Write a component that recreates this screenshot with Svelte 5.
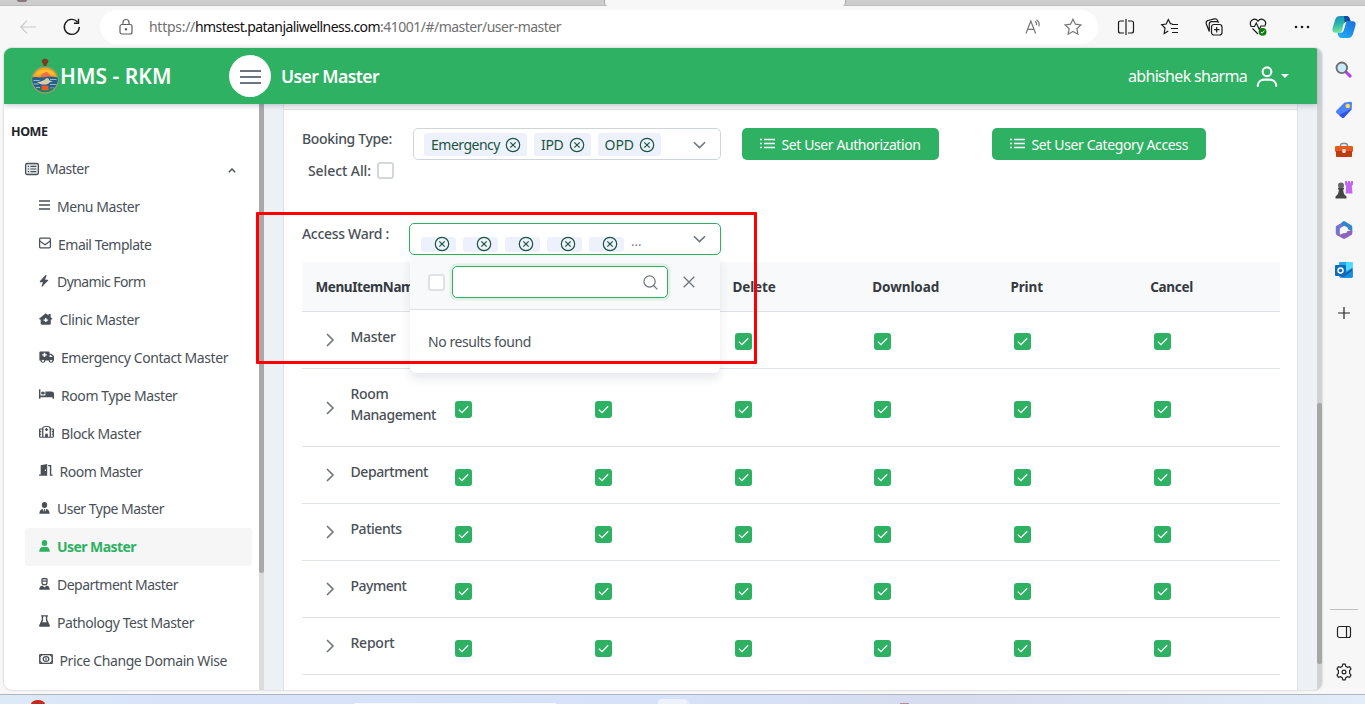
<script>
  // Tightens or opens the tracking of a label until it takes up the given width.
  function fit(node, width) {
    const n = node.textContent.length;
    const natural = node.getBoundingClientRect().width;
    node.style.letterSpacing = `${(width - natural) / n}px`;
  }

  const icons = {
    list: '<rect x=".7" y="1.7" width="14.6" height="12.6" rx="1.6" fill="#e4e8ec" stroke="currentColor" stroke-width="1.5"/><path d="M3.2 5h1.5M6.2 5h6.7M3.2 8h1.5M6.2 8h6.7M3.2 11h1.5M6.2 11h6.7" stroke="currentColor" stroke-width="1.4"/>',
    bars: '<path d="M0 2.700h16M0 8h16M0 13.300h16" stroke="currentColor" stroke-width="1.900"/>',
    mail: '<rect x=".8" y="1.600" width="14.4" height="12.800" rx="1.5" fill="none" stroke="currentColor" stroke-width="1.7"/><path d="M1 5.2l7 5 7-5" fill="none" stroke="currentColor" stroke-width="1.7"/>',
    bolt: '<path d="M10.200.3 1.300 8.400c-.5.500-.1 1.100.5 1.100h4.600l-2.300 5.300c-.2.7.5 1.100 1.100.7l9.500-8.100c.5-.4.2-1.100-.4-1.100H9.700l2.300-5.200c.3-.8-1.100-1.500-1.800-.8z" fill="currentColor"/>',
    clinic: '<path fill-rule="evenodd" d="M8 .3 11.300 3.300V1.200h2.500v4.400L16 7.800l-.8.9H14V14c0 .8-.6 1.500-1.300 1.500H3.300C2.600 15.500 2 14.800 2 14V8.700H.8L0 7.800zM7.200 6.600v1.900H5.300v1.700h1.900v1.900h1.700v-1.900h1.900V8.500H8.900V6.600z" fill="currentColor"/>',
    ambulance: '<path fill-rule="evenodd" d="M1.500.5h8.700c.7 0 1.100.5 1.100 1.100V3.500h1.900L16 6.700v6h-1a2.200 2.200 0 0 1-4.300 0H6.300a2.200 2.200 0 0 1-4.300 0H.4V1.600C.4 1 .8.500 1.500.5zM5 2.400v1.900H3.300v1.800H5V8h1.700V6.100h1.700V4.300H6.700V2.400zm6.300 2.800V8h3.200v-.5l-2-2.300z" fill="currentColor"/><circle cx="4.200" cy="13" r="2" fill="#fff" stroke="currentColor" stroke-width="1.400"/><circle cx="12.900" cy="13" r="2" fill="#fff" stroke="currentColor" stroke-width="1.400"/>',
    bed: '<path d="M0 1.800h1.500v8.200h5.300V4.700h6.400A2.800 2.800 0 0 1 16 7.500v6.900h-1.500v-2.200h-13v2.200H0z" fill="currentColor"/><circle cx="4.200" cy="6.600" r="2" fill="currentColor"/>',
    hospital: '<path d="M4 15V3C4 1.300 5 .7 8 .7s4 .6 4 2.300v12M4 4H1.200c-.4 0-.5.2-.5.5v9.500c0 .6.3 1 1 1h12.600c.7 0 1-.4 1-1V4.500c0-.3-.1-.5-.5-.5H12M.7 7.500h1.700M.7 11h1.700M13.600 7.500h1.700M13.600 11h1.700M8 2.800v4M6.300 4.800h3.400" fill="none" stroke="currentColor" stroke-width="1.400"/><path d="M6.500 15v-3.500a1.500 1.500 0 0 1 3 0V15z" fill="currentColor"/>',
    door: '<path fill-rule="evenodd" d="M2 1.800 9.700.1v15.400H0v-1.600h2zM7 7.300v2h1.200v-2z" fill="currentColor"/><path d="M10.800 2.300h2.900v12.400H16" fill="none" stroke="currentColor" stroke-width="1.700"/>',
    tie: '<circle cx="8" cy="4" r="3.900" fill="currentColor"/><path d="M.5 15.600c0-3.600 1.800-5.900 5-6.300L6.800 13l.7-2.300-.7-1.400h2.400l-.7 1.400.7 2.300 1.300-3.700c3.200.4 5 2.700 5 6.300z" fill="currentColor"/>',
    user: '<circle cx="8" cy="4" r="4" fill="currentColor"/><path d="M.3 15.800c0-3.900 2-6.500 5.300-6.500h4.800c3.300 0 5.300 2.600 5.300 6.500z" fill="currentColor"/>',
    nurse: '<path d="M4.300 1.500C6 .4 10 .4 11.700 1.500v4c0 4.600-7.400 4.600-7.400 0zM4.300 4.300h7.400" fill="none" stroke="currentColor" stroke-width="1.700"/><path d="M.3 15.800c0-3.600 1.800-5.500 4.700-5.900l3 2.700 3-2.700c2.900.4 4.700 2.300 4.700 5.900z" fill="currentColor"/>',
    flask: '<path fill-rule="evenodd" d="M3 .2h10v1.900h-1v4.200l3.700 7.200c.5 1-.1 2.300-1.300 2.300H1.600c-1.200 0-1.800-1.300-1.300-2.300L4 6.300V2.100H3zM6 2.100v5L4.800 9.500h6.400L10 7.100v-5z" fill="currentColor"/>',
    money: '<rect x=".9" y="2.200" width="14.200" height="11.600" rx=".8" fill="none" stroke="currentColor" stroke-width="1.700"/><circle cx="8" cy="8" r="3.200" fill="none" stroke="currentColor" stroke-width="1.500"/><path d="M8 6.300v3.400M1 5 3.500 2.500M1 11l2.500 2.500M12.500 2.500 15 5M12.500 13.500 15 11" stroke="currentColor" stroke-width="1.300"/>'
  };

  const menu = [
    ['bars', 'Menu Master', 82.5, 11, 8],
    ['mail', 'Email Template', 93.5, 12, 8],
    ['bolt', 'Dynamic Form', 88.5, 10, 9],
    ['clinic', 'Clinic Master', 80, 13.5, 8],
    ['ambulance', 'Emergency Contact Master', 167, 15, 8],
    ['bed', 'Room Type Master', 116.5, 15, 8],
    ['hospital', 'Block Master', 80, 15, 8],
    ['door', 'Room Master', 83, 13.5, 8],
    ['tie', 'User Type Master', 107, 11, 8],
    ['user', 'User Master', 79, 11, 8],
    ['nurse', 'Department Master', 121, 11, 8],
    ['flask', 'Pathology Test Master', 137, 11, 8],
    ['money', 'Price Change Domain Wise', 167.5, 14, 7.5]
  ];

  const tags = [['Emergency', 69], ['IPD', 22.500], ['OPD', 29.500]];
  const heads = [['Delete', 43], ['Download', 67], ['Print', 32.500], ['Cancel', 43]];
  const rows = [
    [['Master', 45]],
    [['Room', 38], ['Management', 85.5]],
    [['Department', 77.5]],
    [['Patients', 51]],
    [['Payment', 56]],
    [['Report', 44]]
  ];
</script>

{#snippet down()}
  <svg class="down" viewBox="0 0 14 8"><path d="M1 1l6 5.800L13 1" /></svg>
{/snippet}
{#snippet remove()}
  <svg class="remove" viewBox="0 0 16 16"><circle cx="8" cy="8" r="6.700" /><path d="M5.300 5.300l5.400 5.400M10.700 5.300l-5.400 5.400" /></svg>
{/snippet}
{#snippet lines()}
  <svg class="lines" viewBox="0 0 15 12"><path d="M0 1.500h2M4 1.500h11M0 5.500h2M4 5.500h11M0 9.500h2M4 9.500h11" /></svg>
{/snippet}

<div class="screen">
  <div class="tabs"><i class="fav"></i><i class="tab"></i></div>

  <div class="toolbar">
    <svg class="back" viewBox="0 0 16 14"><path d="M16 7H1M7 .7.800 7 7 13.300" /></svg>
    <svg class="reload" viewBox="0 0 18 18"><path d="M14.500 4A7.500 7.500 0 1 0 16.300 9M15.500 .8v4.400H11" /></svg>
    <div class="address">
      <svg class="lock" viewBox="0 0 14 16"><rect x="1" y="5.500" width="12" height="9.500" rx="2" /><path d="M4 5.500V3.500a3 3 0 0 1 6 0v2" /><circle cx="7" cy="10.200" r=".7" /></svg>
      <span class="url"><span use:fit={46}>https://</span><b use:fit={185}>hmstest.patanjaliwellness.com</b><span use:fit={181}>:41001/#/master/user-master</span></span>
      <svg class="read" viewBox="0 0 17 16"><path d="M1 14.500 5.800 2l4.800 12.500M2.700 10.300h6.200" /><path d="M10 2.200c1.500 1 1.800 2.600 1.500 4M11.500.8c2.600 1.700 3 4.200 2.400 6.500" /></svg>
      <svg class="star" viewBox="0 0 18 18"><path d="M9 1.200l2.400 5 5.500.7-4 3.800 1 5.500L9 13.500l-4.900 2.700 1-5.500-4-3.800 5.500-.7z" /></svg>
    </div>
    <div class="tools">
      <svg viewBox="0 0 18 18"><path d="M7 3H3.500C2.300 3 1.500 3.700 1.500 5v8c0 1.300.8 2 2 2H7M11 3h3.500c1.200 0 2 .7 2 2v8c0 1.300-.8 2-2 2H11M9 1v16" /></svg>
      <svg viewBox="0 0 18 18"><path d="M11.500 6 9.500 5.700 7.300 1.500 5.200 6l-4.500.7L4 10l-.8 5.500 4.100-2.500M11 6.500h6M10 10.500h7M11 14.500h6" /></svg>
      <svg viewBox="0 0 18 18"><rect x="6.500" y="6.500" width="10.500" height="10.500" rx="2.500" /><path d="M11.700 9v5.500M9 11.700h5.500M4.300 13.500 1.300 6C.8 4.300 1.300 3 3 2.500l6.500-1.600c1.500-.3 2.500.2 3 1.500l.3 1M4.300 13.500V6c0-1.500.8-2.300 2.200-2.300h5.500c1 0 1.500.3 2 .8" /></svg>
      <svg viewBox="0 0 18 18"><path d="M2 8C-.5 3 5.500-1.200 9 3.200c3.500-4.400 9.500-.2 7 4.300M1.500 8.500h4L7.300 5l3 6.500L12 8h4.500M3.500 10.500 9 16" /><circle class="ok" cx="13.600" cy="13.800" r="3.900" /><path class="tick" d="M12 14l1.200 1.200 2.300-2.600" /></svg>
      <svg class="dots" viewBox="0 0 18 18"><circle cx="3" cy="9" r="1.300" /><circle cx="9" cy="9" r="1.300" /><circle cx="15" cy="9" r="1.300" /></svg>
      <svg class="copilot" viewBox="0 0 24 24">
        <defs>
          <linearGradient id="ca" x1="0" y1="0" x2=".2" y2="1"><stop offset="0" stop-color="#1687c7" /><stop offset=".5" stop-color="#27b6a8" /><stop offset="1" stop-color="#7be3a0" /></linearGradient>
          <linearGradient id="cb" x1="1" y1="0" x2="0" y2="1"><stop offset="0" stop-color="#1b6de0" /><stop offset="1" stop-color="#22b5f5" /></linearGradient>
        </defs>
        <path d="M8.500 1h6c2 0 3 1.500 3.500 3.500l.7 2h-3.300c-2 0-2.800 1-3.300 3l-1.400 5c-.7 2.300-1.500 3.300-3.500 3.300H3.300C.8 17.800-.1 16 .5 13.500l2.700-9C4 2 5.800 1 8.500 1z" fill="url(#ca)" />
        <path d="M15.500 23h-6c-2 0-3-1.500-3.500-3.500l-.6-1.700h3.200c2 0 2.800-1.300 3.300-3.300l1.400-5c.7-2.300 1.500-3.300 3.500-3.300h3.900c2.500 0 3.400 1.800 2.800 4.300l-2.700 9c-.8 2.500-2.600 3.500-5.300 3.500z" fill="url(#cb)" />
        <path d="M12 1h2.500c2 0 3 1.500 3.500 3.500l.7 2h-3.300c-1.300 0-2 .5-2.600 1.500z" fill="#104da0" />
        <path d="M11.700 8.500 14 7.200l-2.300 7.500c-.5 1.500-1 2.300-2.200 2.800z" fill="#f7f7f7" />
      </svg>
    </div>
  </div>

  <div class="middle">
    <div class="page">
      <div class="view">
        <header>
          <svg class="logo" viewBox="0 0 28 36">
            <circle cx="14" cy="22" r="13" fill="#f5a81f" stroke="#8f9a6e" stroke-width="1.400" />
            <path d="M4.500 16.500C8 10 20 10 23.500 16.500z" fill="#fbbf2b" />
            <path d="M10.800 2.500C12 .3 16 .3 17.200 2.500c.8 2-1.500 2.500-1.800 5.500h-2.800c0-3-2.500-3.500-1.800-5.500z" fill="#7d3b22" />
            <path d="M9.500 19.500c0-3 2-4.500 4-4.500 1-1.500 3-1 3.500 0 2 .5 2.500 2.500 2 4.500z" fill="#ee6f45" />
            <path d="M1.300 19.500C6 18.300 9 20 14 19s9-.5 12.700.5c.8 7-3.700 14-12.700 14.800C5 33.500.5 26.500 1.300 19.500z" fill="#245f8e" />
            <path d="M2.500 22.500h6M19 21.500h6.500M2.500 26h5M19 26.500h6.500M5 29.500h4M19 30h4" stroke="#8fb8c8" stroke-width="1" />
            <path d="M6 24c3 .5 5-1.500 7.500-2 1-2.300 4-2.500 4.500-.5.200 1 2 1.500 4 1.500-1.500 1-3 1-4 2-2 2-8 2.500-12-1z" fill="#d6cda8" />
            <path d="M5 30c4 1 14 1 18 0-2 3-5.500 4.300-9 4.300S7 33 5 30z" fill="#1f7f62" />
            <rect x="10.500" y="27.500" width="7" height="4.700" rx="1" fill="#e85b24" />
          </svg>
          <span class="brand"><span use:fit={111.5}>HMS - RKM</span></span>
          <span class="burger"><i></i><i></i><i></i></span>
          <span class="title"><span use:fit={98}>User Master</span></span>
          <span class="who"><span use:fit={119}>abhishek sharma</span></span>
          <svg class="person" viewBox="0 0 22 22"><circle cx="11" cy="6" r="4.600" /><path d="M1.300 21c0-4 3-6.700 7-6.700h5.400c4 0 7 2.700 7 6.700" /></svg>
          <i class="caret"></i>
        </header>

        <div class="body">
          <aside>
            <div class="nav">
              <div class="home"><span use:fit={36.5}>HOME</span></div>
              <div class="group">
                <svg width="14" height="14" viewBox="0 0 16 16">{@html icons.list}</svg>
                <span use:fit={43}>Master</span>
                <svg class="up" viewBox="0 0 8 5"><path d="M.8 4.300 4 1l3.200 3.300" /></svg>
              </div>
              {#each menu as [icon, label, width, size, gap]}
                <div class="item" class:active={label === 'User Master'}>
                  <svg style="width:{size}px;margin-right:{gap - 1}px" viewBox="0 0 16 16" preserveAspectRatio="none">{@html icons[icon]}</svg>
                  <span use:fit={width}>{label}</span>
                </div>
              {/each}
            </div>
            <div class="side-scroll"><i></i></div>
          </aside>

          <main>
            <div class="card">
              <div class="card-top"></div>
              <div class="content">
                <div class="booking">
                  <div class="labels">
                    <div class="label"><span use:fit={90}>Booking Type:</span></div>
                    <div class="label all"><span use:fit={63}>Select All:</span><i class="box"></i></div>
                  </div>
                  <div class="select">
                    {#each tags as [t, w]}
                      <span class="tag"><span use:fit={w}>{t}</span>{@render remove()}</span>
                    {/each}
                    {@render down()}
                  </div>
                  <button class="first">{@render lines()}<span use:fit={139}>Set User Authorization</span></button>
                  <button class="second">{@render lines()}<span use:fit={156.5}>Set User Category Access</span></button>
                </div>

                <div class="ward">
                  <div class="label"><span use:fit={87}>Access Ward :</span></div>
                  <div class="select open">
                    {#each [0, 1, 2, 3, 4] as _}
                      <span class="tag">{@render remove()}</span>
                    {/each}
                    <span class="more">...</span>
                    {@render down()}
                    <div class="panel">
                      <div class="panel-head">
                        <i class="box"></i>
                        <div class="search"><svg viewBox="0 0 16 16"><circle cx="7" cy="7" r="6" /><path d="M11.500 11.500l3.800 3.800" /></svg></div>
                        <svg class="close" viewBox="0 0 12 12"><path d="M.7.700l10.600 10.600M11.300.7.700 11.300" /></svg>
                      </div>
                      <div class="empty"><span use:fit={103}>No results found</span></div>
                    </div>
                  </div>
                </div>

                <div class="table">
                  <div class="row head">
                    <div class="namehead"><span use:fit={106}>MenuItemName</span></div>
                    <div></div><div></div>
                    {#each heads as [h, w]}<div class="th"><span use:fit={w}>{h}</span></div>{/each}
                  </div>
                  {#each rows as words}
                    <div class="row line">
                      <div class="name">
                        <svg viewBox="0 0 8 14"><path d="M1 1l6 6-6 6" /></svg>
                        <div class="words">
                          {#each words as [word, w]}<div><span use:fit={w}>{word}</span></div>{/each}
                        </div>
                      </div>
                      {#each [0, 1, 2, 3, 4, 5] as _}
                        <div class="cell"><svg viewBox="0 0 17 17"><rect width="17" height="17" rx="3" /><path d="M3.800 8.600l3.200 3 6.200-6.400" /></svg></div>
                      {/each}
                    </div>
                  {/each}
                </div>
              </div>
            </div>
          </main>
        </div>
      </div>
      <div class="page-scroll"><i></i></div>
    </div>

    <div class="rail">
      <svg viewBox="0 0 18 18"><path d="M10.500 10.500l5.500 5.500" stroke="#b13df0" stroke-width="3" /><circle cx="6.800" cy="6.800" r="5.300" fill="#c9eafa" stroke="#6c6c6c" stroke-width="1.800" /></svg>
      <svg viewBox="0 0 18 18"><path d="M9.500 1.500 15.500 .8c1 0 1.500.5 1.500 1.500l-.3 6.200-7.500 8c-.8.800-1.600.8-2.400 0L1.500 12c-.8-.8-.8-1.500 0-2.400z" fill="#4c83f8" /><path d="M17 7.500l-8 9c-.7.700-1.500.7-2.200 0L4 14z" fill="#3851e8" /><circle cx="12.800" cy="5" r="1.600" fill="#fff" stroke="#ffd047" stroke-width="1.500" /></svg>
      <svg viewBox="0 0 18 18"><path d="M5.500 5c0-2 .7-2.500 2-2.500h3c1.300 0 2 .5 2 2.500" fill="none" stroke="#888" stroke-width="1.400" /><rect x="0" y="5" width="18" height="6" rx="1.300" fill="#e45a20" /><path d="M1 10h16v5c0 .7-.4 1-1 1H2c-.6 0-1-.3-1-1z" fill="#bf3911" /><rect x="7.300" y="8" width="3.400" height="4" rx=".8" fill="#ddd" /></svg>
      <svg viewBox="0 0 18 18"><path d="M10 0h2v1.500h1V0h2v1.500h1V0h2v3.500L16.800 5l.7 7.500h-7L11.200 5 10 3.500z" fill="#c566f3" /><circle cx="6" cy="4.500" r="3" fill="#666" /><path d="M3 7h6v1.500H8L9 13l2.500 2.500V17.500H.5v-2L3 13l1-4.500H3z" fill="#464646" /></svg>
      <svg viewBox="0 0 18 18"><path d="M9 .5 2 4.500C1 5 .8 6 .8 7v5l4 2V7.500L12 3z" fill="#6f74d6" /><path d="M7.500.8C8.500.2 9.500.2 10.500.8l5.500 3.300c1 .5 1.300 1.400 1.300 2.400v4.200L12.800 8V6.800L6 3z" fill="#3485ce" /><path d="M17.300 9.500v2.800c0 .8-.4 1.500-1 1.800l-6 3.400c-.8.500-1.700.5-2.500 0L1.500 14c-.5-.4-.7-1-.7-2l5 1.500L12 10z" fill="#8d64be" /><circle cx="9.200" cy="9" r="3.300" fill="#f7f7f7" /></svg>
      <svg viewBox="0 0 18 18"><rect x="4" y="1" width="13.500" height="15.500" rx="1" fill="#28a8ea" /><path d="M11 1h6.500v6L11 10z" fill="#50d9ff" /><path d="M17.500 7v9.500H5z" fill="#0a5fad" /><path d="M17.500 9.500v6c0 .6-.4 1-1 1H8z" fill="#1490df" /><rect x="0" y="4" width="11" height="11" rx="1" fill="#0f6cbd" /><circle cx="5.500" cy="9.500" r="2.500" fill="none" stroke="#fff" stroke-width="1.500" /></svg>
      <svg class="plus" viewBox="0 0 18 18"><path d="M9 3v12M3 9h12" /></svg>
      <hr />
      <svg class="ink" viewBox="0 0 18 18"><rect x="2.500" y="3.500" width="13" height="11" rx="2" /><path d="M11.500 3.500v11" /></svg>
      <svg class="ink" viewBox="0 0 18 18"><path d="M7.200 3.300 7.800 1.200h2.400l.6 2.100 1.700 1 2.200-.6 1.300 2.200-1.400 1.700v2.800l1.400 1.700-1.300 2.200-2.200-.6-1.700 1-.6 2.100H7.800l-.6-2.100-1.700-1-2.200.6L2 12.100l1.400-1.700V7.600L2 5.900l1.300-2.200 2.200.6z" /><circle cx="9" cy="9" r="1.900" /></svg>
    </div>
  </div>

  <div class="taskbar"><i class="red"></i><i class="find"></i><i class="app"></i><i class="dot"></i></div>
  <div class="marker"></div>
</div>

<style>
  :global(body) { overflow: hidden; }
  * { box-sizing: border-box; }
  svg { display: block; flex: none; fill: none; overflow: visible; }
  i { display: block; flex: none; }
  span { white-space: nowrap; }
  .screen { position: relative; width: 1365px; height: 704px; display: flex; flex-direction: column; overflow: hidden; background: #f7f7f7; color: #495057; font: 14px/21px "Noto Sans", sans-serif; }

  .tabs { height: 6px; flex: none; background: #cdcdcd; border-bottom: 1px solid #bdbdbd; display: flex; }
  .fav { width: 10px; height: 2px; margin-left: 17px; background: #85797d; border-radius: 0 0 5px 5px; }
  .tab { width: 242px; height: 6px; margin-left: 577px; background: #f7f7f7; border: solid #aaa; border-width: 0 1px; border-radius: 0 0 4px 4px; }

  .toolbar { height: 42px; flex: none; display: flex; align-items: center; }
  .toolbar svg { stroke: #1b1b1b; stroke-width: 1.200; }
  .toolbar .back { width: 16px; height: 14px; margin-left: 20px; stroke: #c9c9c9; }
  .toolbar .reload { width: 18px; height: 18px; margin-left: 27px; stroke-width: 1.400; }
  .address { width: 998px; height: 34px; margin-left: 19px; padding-left: 19px; border-radius: 17px; background: #fff; display: flex; align-items: center; }
  .toolbar .lock { width: 14px; height: 16px; stroke: #606060; }
  .url { margin-left: 16px; width: 876px; color: #707070; font: 14px/20px "Noto Sans", sans-serif; }
  .url b { font-weight: 400; color: #111; }
  .toolbar .read { width: 17px; height: 16px; stroke: #777; stroke-width: 1.200; }
  .toolbar .star { width: 18px; height: 18px; margin-left: 22px; stroke: #777; }
  .tools { display: flex; align-items: center; margin-left: 19px; gap: 26px; }
  .tools svg { width: 18px; height: 18px; }
  .tools .ok { fill: #107c10; stroke: none; }
  .tools .tick { stroke: #fff; stroke-width: 1; }
  .tools .dots { fill: #1b1b1b; stroke: none; }
  .tools .copilot { width: 24px; height: 24px; margin-left: -5px; stroke: none; }

  .middle { height: 646px; flex: none; display: flex; }
  .page { width: 1318px; height: 642px; margin-left: 4px; flex: none; display: flex; border-radius: 8px; overflow: hidden; background: #edf1f6; box-shadow: 0 0 2px #aaa; }
  .view { width: 1313px; display: flex; flex-direction: column; }
  .page-scroll { width: 5px; background: #d0d2d6; padding-top: 355px; }
  .page-scroll i { height: 261px; background: #a6a6a6; border-radius: 2px; }

  header { position: relative; z-index: 2; height: 56px; flex: none; display: flex; align-items: center; background: #2eb162; color: #fff; box-shadow: 0 2px 5px rgba(60, 70, 90, .25); }
  .logo { width: 28px; height: 36px; margin-left: 27px; }
  .brand { width: 170px; margin-left: 1px; font-size: 21px; font-weight: 600; }
  .burger { width: 42px; height: 42px; margin-left: -1px; border-radius: 50%; background: #fff; display: flex; flex-direction: column; align-items: center; justify-content: center; gap: 4px; padding-top: 1px; }
  .burger i { width: 21px; height: 2px; background: #6c757d; }
  .title { width: 846px; margin-left: 10px; font-size: 17.500px; font-weight: 600; }
  .who { width: 128px; margin-left: 1px; font-size: 16px; }
  .title > span, .who > span { display: inline-block; }
  .person { width: 22px; height: 21px; stroke: #fff; stroke-width: 2.200; stroke-linecap: round; }
  .caret { margin-left: 3px; border: 4px solid transparent; border-top-color: #fff; border-bottom: 0; }

  .body { height: 586px; flex: none; display: flex; }
  aside { width: 260px; display: flex; background: #fff; }
  .nav { width: 255px; padding-top: 17px; }
  .home { height: 28.600px; padding-left: 7px; color: #212529; font-size: 12.500px; font-weight: 700; }
  .group, .item { height: 37.830px; display: flex; align-items: center; }
  .group { padding-left: 21px; gap: 7px; }
  .up { width: 8px; height: 5px; margin-left: auto; margin-right: 23px; margin-top: 3px; stroke: #495057; stroke-width: 1.400; }
  .item { margin: 0 7px 0 21px; padding-left: 14px; border-radius: 3px; }
  .item svg { height: 12px; margin-top: -2px; }
  .active { background: #f6f6f6; color: #2eb162; font-weight: 700; }
  .side-scroll { width: 5px; background: #dcdcdc; }
  .side-scroll i { height: 469px; background: #a9a9a9; border-radius: 0 0 2px 2px; }

  main { width: 1053px; padding-left: 19px; }
  .card { width: 1015px; height: 586px; background: #fff; border: solid #dce2ea; border-width: 0 1px; }
  .card-top { height: 6px; background: #f8f8f9; border-bottom: 1px solid #dfe1e5; }
  .content { padding: 18px 17px 0 18px; }
  .booking { height: 95px; display: flex; align-items: flex-start; }
  .labels { width: 111px; }
  .label { font-weight: 500; }
  .booking .label { height: 31px; }
  .booking .all { height: 22px; display: flex; align-items: center; padding-left: 6px; }
  .box { width: 17px; height: 17px; border: 2px solid #d3d7dc; border-radius: 3px; background: #fff; margin-left: 6px; }
  .select { position: relative; width: 308px; height: 32px; border: 1px solid #ced4da; border-radius: 5px; display: flex; align-items: center; gap: 7px; padding: 1px 14px 0 10px; background: #fff; }
  .tag { height: 23px; padding: 0 6px 0 7px; display: flex; align-items: center; gap: 5px; border-radius: 3px; background: #edf1fc; color: #1d5540; }
  .remove { width: 16px; height: 16px; stroke: #1d5540; stroke-width: 1.200; }
  .down { width: 13px; height: 8px; margin-left: auto; stroke: #6c757d; stroke-width: 1.700; }
  button { height: 32px; border: 0; border-radius: 5px; padding: 0 0 0 18px; background: #2eb162; color: #fff; display: flex; align-items: center; gap: 6.500px; font: 14px/21px "Noto Sans", sans-serif; }
  .lines { width: 15px; height: 12px; stroke: #fff; stroke-width: 1.600; }
  .first { width: 197px; margin-left: 21px; }
  .second { width: 214px; margin-left: 53px; }

  .ward { height: 39px; display: flex; align-items: flex-start; }
  .ward .label { width: 107px; }
  .open { width: 312px; border-color: #2eb162; padding: 0 14px 0 11px; }
  .open .tag { height: 15px; width: 35px; padding: 0 0 0 13px; margin-top: 10px; }
  .more { font-size: 13px; color: #6c757d; margin-top: 4px; }
  .panel { position: absolute; z-index: 5; left: 0; top: 31px; width: 310px; height: 118px; background: #fff; border-radius: 0 0 6px 6px; box-shadow: 0 6px 10px rgba(30, 40, 60, .1); }
  .panel-head { height: 55px; display: flex; align-items: center; padding-left: 18px; background: #f8f9fa; border-bottom: 1px solid #dee2e6; }
  .panel .box { margin-left: 0; border-color: #dee2e6; }
  .search { width: 216px; height: 32px; margin-left: 7px; border: 1px solid #2eb162; border-radius: 5px; background: #fff; box-shadow: 0 0 0 2.500px #dff0e6; display: flex; align-items: center; justify-content: flex-end; padding-right: 9px; }
  .search svg, .close { stroke: #6c757d; stroke-width: 1.300; }
  .search svg { width: 15px; height: 15px; }
  .close { width: 12px; height: 12px; margin-left: 15px; }
  .empty { padding: 21px 18px; }

  .table { width: 978px; }
  .row { display: flex; border-bottom: 1px solid #dee2e6; min-height: 57px; }
  .row > div { width: 139.700px; flex: none; }
  .head { height: 50px; min-height: 50px; align-items: center; padding-top: 2px; background: #f8f9fa; color: #343a40; font-weight: 700; font-size: 13.500px; }
  .head > .namehead { padding-left: 13.500px; }
  .th { padding-left: 11.500px; }
  .th:nth-last-child(-n+2) { padding-left: 10px; }
  .name { display: flex; align-items: center; padding-left: 24px; }
  .name svg { width: 8px; height: 14px; stroke: #6c757d; stroke-width: 1.600; }
  .words { align-self: flex-start; margin-left: 16.500px; padding: 14px 0 21px; font-weight: 500; line-height: 21px; }
  .cell { display: flex; align-items: center; padding: 5px 0 0 13.500px; }
  .line:nth-child(2) .cell { padding-top: 3px; }
  .line:nth-child(3) .cell { padding-top: 4px; }
  .cell svg { width: 17px; height: 17px; }
  .cell rect { fill: #2eb162; }
  .cell path { stroke: #fff; stroke-width: 1.300; }

  .rail { margin-left: 13px; width: 18px; display: flex; flex-direction: column; align-items: center; padding-top: 13px; gap: 22px; }
  .rail svg { width: 18px; height: 18px; }
  .rail .plus, .rail .ink { stroke: #242424; stroke-width: 1.200; }
  .rail .plus { margin-top: 3px; }
  .rail hr { width: 28px; margin: 265px -5px -9px; border: 0; border-top: 1px solid #c0c0c0; flex: none; }

  .taskbar { height: 10px; flex: none; background: linear-gradient(90deg, #dceaf8, #d8e3fa 12%, #d6e2f9 50%, #d7dcef 70%, #e2edf9); border-top: 1px solid #b0b6bf; display: flex; align-items: flex-end; }
  .red { width: 14px; height: 4px; margin-left: 31px; background: #c42b1c; border-radius: 7px 7px 0 0 / 4px 4px 0 0; }
  .find { width: 202px; height: 1px; margin-left: 309px; background: #f5f8fe; border-radius: 6px 6px 0 0; }
  .app { width: 29px; height: 5px; margin-left: 102px; background: #edf2fc; border-radius: 3px 3px 0 0; box-shadow: 3px 1px 0 #e4eafa; }
  .dot { width: 9px; height: 1px; margin-left: 213px; background: #b98a9d; }
  .marker { position: absolute; z-index: 9; left: 256px; top: 212px; width: 501px; height: 152px; border: 3px solid #f00; border-radius: 1px; }
</style>
